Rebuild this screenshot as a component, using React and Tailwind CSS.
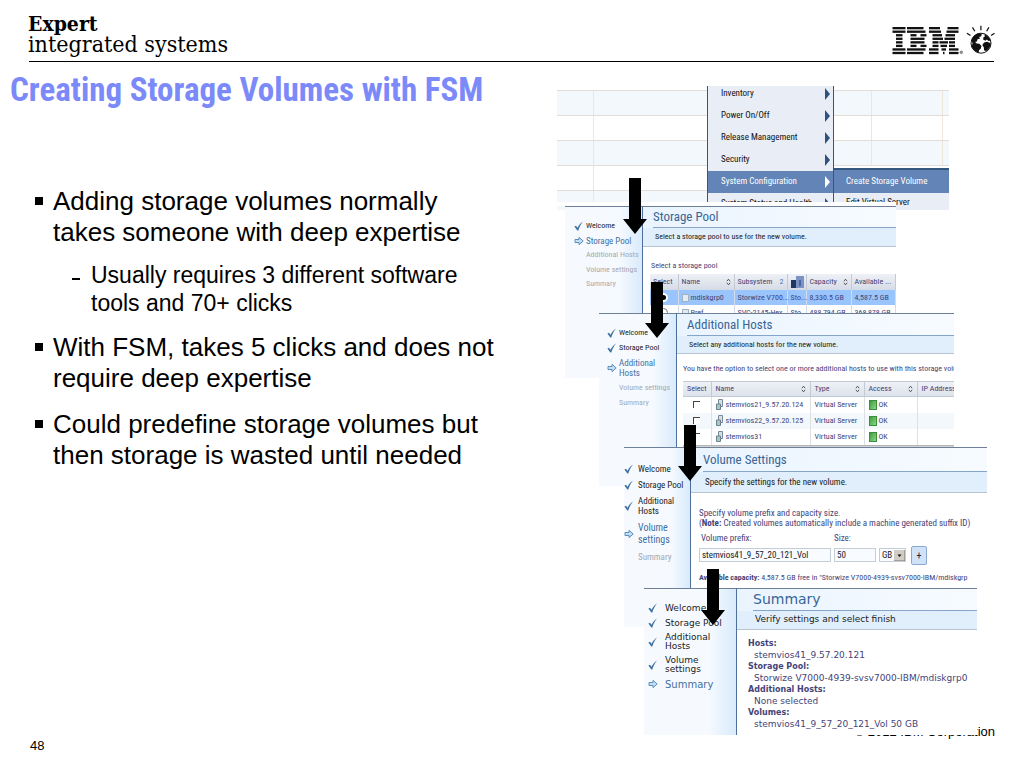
import { Fragment } from "react";

const MENU_ITEMS = [
  { label: "Inventory" },
  { label: "Power On/Off" },
  { label: "Release Management" },
  { label: "Security" },
  { label: "System Configuration", active: true },
  { label: "System Status and Health" },
];

const POOLS = [
  { name: "mdiskgrp0", subsystem: "Storwize V700...", type: "Sto...", capacity: "8,330.5 GB", available: "4,587.5 GB", selected: true },
  { name: "Pref", subsystem: "SVC-2145-Hex...", type: "Sto...", capacity: "488,794 GB", available: "368,878 GB" },
];

const HOSTS = ["stemvios21_9.57.20.124", "stemvios22_9.57.20.125", "stemvios31"];

const SUMMARY = [
  ["Hosts:", "stemvios41_9.57.20.121"],
  ["Storage Pool:", "Storwize V7000-4939-svsv7000-IBM/mdiskgrp0"],
  ["Additional Hosts:", "None selected"],
  ["Volumes:", "stemvios41_9_57_20_121_Vol 50 GB"],
];

// [x1, x2] spans for each of the eight stripes
const IBM_ROWS = [
  [[0, 13], [14.5, 31], [36.5, 47.5], [55, 66]],
  [[0, 13], [14.5, 33], [36.5, 48.5], [54, 66]],
  [[3.5, 10], [18, 24], [28, 34], [40, 49.5], [53, 62.5]],
  [[3.5, 10], [18, 32], [40, 50.5], [52, 62.5]],
  [[3.5, 10], [18, 32], [40, 46], [47, 55.5], [56.5, 62.5]],
  [[3.5, 10], [18, 24], [28, 34], [40, 46], [48, 54.5], [56.5, 62.5]],
  [[0, 13], [14.5, 33], [36.5, 46], [49, 53.5], [56.5, 66]],
  [[0, 13], [14.5, 31], [36.5, 46], [50.5, 52], [56.5, 66]],
];

function IbmLogo() {
  return (
    <svg viewBox="-1.5 0 104 36" className="h-9 w-[104px] overflow-visible" role="img" aria-label="IBM">
      {IBM_ROWS.map((row, i) =>
        row.map(([a, b]) => (
          <rect key={`${i}-${a}`} x={a + 1} y={7 + i * 3.55} width={b - a} height="2.3" fill="#111" />
        ))
      )}
      <circle cx="69.8" cy="32.3" r="1.3" fill="#999" stroke="#777" strokeWidth="0.8" />
      <g stroke="#111" strokeWidth="1.2">
        <path d="M75.4 13.2 79 15.6M81 7.4l2.3 3.8M89.4 5.8v4.4M97.4 7.4l-2.3 3.8M103 13.2l-3.4 2.4" />
      </g>
      <circle cx="89.5" cy="23.2" r="10" fill="#fff" stroke="#111" strokeWidth="1" />
      <path
        fill="#111"
        d="M80.2 19.500c1.200-3.200 3.800-5.600 7.400-6.200l2.600.8-.4 2.200-2.200.6 1 1.800-2.400.4-.8 2.400-1.800.6 1.600 1.400 2.600.2 2.200 2.200-.8 2.800-1.800 1.600v2.200c-3.600-.6-6.400-3.400-7.400-6.600l1-2.200zM92.800 14.200c3 1 5.400 3.400 6.200 6.400l-1.800.4-2-1.400-1.200 1.200-2.400-1.200.4-2.400 1.400-.8zM92.600 22.400l3-.6 3.600 1.400c-.2 3.400-1.800 6-4.400 7.800l-2.200-.6-.2-3-1.600-2.400z"
      />
    </svg>
  );
}

function DownArrow({ className }) {
  return (
    <svg viewBox="0 0 24 56" className={`absolute z-20 h-14 w-6 ${className}`} aria-hidden="true">
      <path d="M6 0h12v41h6L12 56 0 41h6z" fill="#000" />
    </svg>
  );
}

function StepIcon({ state }) {
  if (state === "done") {
    return (
      <svg viewBox="0 0 10 10" className="size-[10px]" aria-hidden="true">
        <path d="M.4 5.600 2 4.700 3.500 6.800C4.800 4 6.600 1.800 9 .4 6.800 3 5.400 5.800 4.300 9.400H3.300z" fill="#41729f" />
      </svg>
    );
  }
  if (state === "current") {
    return (
      <svg viewBox="0 0 10 10" className="size-[10px]" aria-hidden="true">
        <path d="M1 3.500h4V1.300L9.200 5 5 8.700V6.500H1z" fill="#c4def2" stroke="#5b8fbd" />
      </svg>
    );
  }
  return <span />;
}

function SortMark() {
  return (
    <svg viewBox="0 0 6 10" className="h-2 w-[5px] shrink-0" aria-hidden="true">
      <path d="M1 4l2-2.500L5 4M1 6l2 2.500L5 6" fill="none" stroke="#333" />
    </svg>
  );
}

function Wizard({ className, sidebar, list, title, titleClass, subtitle, subtitleClass, steps, stepGrid, currentClass, children }) {
  return (
    <section className={`absolute flex items-start ${className}`}>
      <nav className={`shrink-0 border-t border-r border-t-[#6d7f99] border-r-[#4d6f9b] bg-linear-to-r from-[#f6faff] from-70% to-[#d9eafb] ${sidebar}`}>
        <ol className={`flex flex-col ${list}`}>
          {steps.map(([label, state]) => (
            <li
              key={label}
              className={`grid items-center ${stepGrid} ${
                state === "done" ? "text-[#222]" : state === "current" ? `text-[#44709f] ${currentClass}` : "text-[#a3a9b1]"
              }`}
            >
              <StepIcon state={state} />
              <span className="whitespace-pre">{label}</span>
            </li>
          ))}
        </ol>
      </nav>
      <div className="min-w-0 flex-1 self-stretch overflow-hidden border-t border-[#6d7f99] bg-white">
        <header className="bg-linear-to-r from-[#eaf4ff] to-[#f7fbff]">
          <h2 className={`border-b border-[#86a5c8] text-[#386594] ${titleClass}`}>{title}</h2>
          <p className={`border-b border-[#b8c4d0] bg-[#e1effc] text-[#222] ${subtitleClass}`}>{subtitle}</p>
        </header>
        {children}
      </div>
    </section>
  );
}

function ContextMenu() {
  return (
    <section className="absolute top-0 left-0 flex h-[124px] w-[392px] items-start overflow-hidden text-[9px]">
      <div className="flex h-[116px] w-[150px] shrink-0 flex-col">
        <div className="h-[5px] shrink-0 border-b border-[#e2ddd6]" />
        {[0, 1, 2, 3, 4].map((i) => (
          <div key={i} className="h-[25px] shrink-0 border-b border-[#e2ddd6] odd:bg-white even:bg-[#f3f8fc]">
            <div className="h-full w-[37px] border-r border-[#eee6dc]" />
          </div>
        ))}
      </div>
      <ul className="-mt-[3px] h-[119px] w-[127px] shrink-0 overflow-hidden border-x border-[#36577f] bg-[#e9edf5] text-[#111]">
        {MENU_ITEMS.map((item) => (
          <li
            key={item.label}
            className={`flex h-[22px] items-center justify-between pr-[3px] pl-[13px] whitespace-nowrap ${
              item.active ? "bg-[#6384b6] text-white" : ""
            }`}
          >
            {item.label}
            <svg viewBox="0 0 5 12" className="h-3 w-[5px] shrink-0" aria-hidden="true">
              <path d="M0 0 5 6 0 12z" fill={item.active ? "#fff" : "#2d527f"} />
            </svg>
          </li>
        ))}
      </ul>
      <div className="flex h-[124px] flex-1 flex-col">
        <div className="h-[5px] shrink-0 border-b border-[#e2ddd6]" />
        {[0, 1, 2].map((i) => (
          <div key={i} className="flex h-[25px] shrink-0 border-b border-[#e2ddd6] odd:bg-white even:bg-[#f3f8fc]">
            <div className="w-[38px] border-r border-[#eee6dc]" />
            <div className="w-[71px] border-r border-[#eee6dc]" />
          </div>
        ))}
        <ul className="mt-[2px] -ml-px flex-1 overflow-hidden border-t-2 border-l border-[#36577f] bg-[#e9edf5] whitespace-nowrap">
          <li className="flex h-[23px] items-center bg-[#6384b6] pl-3 text-white">Create Storage Volume</li>
          <li className="flex h-[20px] items-center pl-3 text-[#111]">Edit Virtual Server</li>
        </ul>
      </div>
    </section>
  );
}

function StoragePool() {
  return (
    <>
      <p className="mt-[14px] ml-2 leading-[10px]">Select a storage pool</p>
      <table className="mt-[3px] ml-[7px] w-[246px] table-fixed border-collapse overflow-hidden">
        <thead className="bg-linear-to-b from-[#eef1f6] to-[#d5dbe6]">
          <tr className="h-4 leading-[12px] whitespace-nowrap *:border-r *:border-[#c3cad6] *:px-[3px] *:text-left *:font-normal">
            <th className="w-[28px]">Select</th>
            <th className="w-[56px]">
              <span className="flex items-center justify-between">Name <SortMark /></span>
            </th>
            <th className="w-[53px]">
              <span className="flex items-center justify-between">
                Subsystem <span className="text-[#4a7bc0]">2</span>
              </span>
            </th>
            <th className="w-[19px]">
              <svg viewBox="0 0 13 12" className="h-3 w-[13px]" aria-label="Type">
                <path d="M0 4h6v8H0z" fill="#1e3765" />
                <path d="M5 0h8v12H5z" fill="#7c92c3" />
                <path d="M8 4h2v6H8z" fill="#4965a3" />
              </svg>
            </th>
            <th className="w-[45px]">
              <span className="flex items-center justify-between">Capacity <SortMark /></span>
            </th>
            <th>Available ...</th>
          </tr>
        </thead>
        <tbody>
          {POOLS.map((p) => (
            <tr key={p.name} className={`h-[15px] leading-[12px] whitespace-nowrap *:border-r *:border-[#d3dcea] *:px-[3px] ${p.selected ? "bg-[#99c4fc]" : ""}`}>
              <td>
                <input
                  type="radio"
                  name="pool"
                  aria-label={p.name}
                  defaultChecked={p.selected}
                  className="mx-auto block size-[9px] appearance-none rounded-full border border-[#777] bg-white checked:border-2 checked:border-white checked:bg-black"
                />
              </td>
              <td>
                <span className="flex items-center gap-[2px]">
                  <span className="h-2 w-[7px] shrink-0 border border-[#9fb2c8] bg-[#e2eaf2]" />
                  {p.name}
                </span>
              </td>
              <td>{p.subsystem}</td>
              <td>{p.type}</td>
              <td>{p.capacity}</td>
              <td>{p.available}</td>
            </tr>
          ))}
        </tbody>
      </table>
    </>
  );
}

function AdditionalHosts() {
  return (
    <>
      <p className="mt-[10px] ml-[6px] leading-[10px] whitespace-nowrap">
        You have the option to select one or more additional hosts to use with this storage volume
      </p>
      <table className="mt-[7px] ml-[6px] w-[272px] table-fixed border-collapse">
        <thead className="bg-linear-to-b from-[#eef1f6] to-[#dce2ea]">
          <tr className="h-[15px] border-y border-[#c3cad6] leading-[12px] whitespace-nowrap *:border-r *:border-[#c3cad6] *:px-1 *:text-left *:font-normal">
            <th className="w-[28px]">Select</th>
            <th className="w-[99px]">
              <span className="flex items-center justify-between">Name <SortMark /></span>
            </th>
            <th className="w-[54px]">
              <span className="flex items-center justify-between">Type <SortMark /></span>
            </th>
            <th className="w-[53px]">
              <span className="flex items-center justify-between">Access <SortMark /></span>
            </th>
            <th>IP Address</th>
          </tr>
        </thead>
        <tbody>
          {HOSTS.map((host) => (
            <tr key={host} className="h-4 leading-[12px] whitespace-nowrap even:bg-[#f3f8fc] *:border-r *:border-[#dde0e4] *:px-1">
              <td>
                <input
                  type="checkbox"
                  aria-label={host}
                  className="mx-auto block size-[7px] appearance-none border-t border-l border-[#444] bg-white"
                />
              </td>
              <td>
                <span className="flex items-center gap-[3px]">
                  <svg viewBox="0 0 7 11" className="h-[11px] w-[7px] shrink-0" aria-hidden="true">
                    <path d="M2.500.5h4v7h-4z" fill="#d6dee6" stroke="#7a8a9c" />
                    <path d="M.5 5h4v5.500h-4z" fill="#a9c8c2" stroke="#6c8290" />
                  </svg>
                  {host}
                </span>
              </td>
              <td>Virtual Server</td>
              <td>
                <span className="flex items-center gap-[2px]">
                  <span className="h-[10px] w-2 border border-[#3c8c3c] bg-linear-to-br from-[#3ba03b] to-[#8ad48a]" />
                  OK
                </span>
              </td>
              <td />
            </tr>
          ))}
        </tbody>
      </table>
      <div className="ml-[6px] h-2 border-t border-[#b5b5b5] bg-[#d2d2d2]" />
    </>
  );
}

function VolumeSettings() {
  return (
    <form className="mt-[15px] ml-2 whitespace-nowrap">
      <p className="leading-[10px]">Specify volume prefix and capacity size.</p>
      <p className="leading-[10px]">
        (<b>Note:</b> Created volumes automatically include a machine generated suffix ID)
      </p>
      <div className="mt-[5px] flex items-end gap-[3px]">
        <label className="w-[132px] leading-[10px]">
          <span className="mb-[5px] block pl-[2px]">Volume prefix:</span>
          <input defaultValue="stemvios41_9_57_20_121_Vol" className="block h-[14px] w-full border border-[#c5cdd6] bg-[#f8fbff] px-[2px] text-[#222]" />
        </label>
        <label className="w-[42px] leading-[10px]">
          <span className="mb-[5px] block">Size:</span>
          <input defaultValue="50" className="block h-[14px] w-full border border-[#c5cdd6] bg-[#f8fbff] px-[2px] text-[#222]" />
        </label>
        <div className="relative w-[27px]">
          <select aria-label="Unit" className="block h-[14px] w-full appearance-none border border-[#c5cdd6] bg-[#f8fbff] px-[2px] text-[#222]">
            <option>GB</option>
          </select>
          <svg viewBox="0 0 11 11" className="pointer-events-none absolute top-[2px] right-[1px] size-[11px]" aria-hidden="true">
            <path d="M0 0h11v11H0z" fill="#d1cdc5" />
            <path d="M11 0v11H0" fill="none" stroke="#77736c" />
            <path d="M3.500 4.500h4l-2 2.500z" fill="#111" />
          </svg>
        </div>
        <button type="button" aria-label="Add" className="-mb-[3px] ml-[2px] h-[19px] w-4 rounded-[2px] border border-[#8ba9cf] bg-[#cfe2f8] text-[10px] leading-[10px] text-[#223]">
          +
        </button>
      </div>
      <p className="mt-[11px] text-[8px] leading-[10px]">
        <b>Available capacity:</b> 4,587.5 GB free in &quot;Storwize V7000-4939-svsv7000-IBM/mdiskgrp
      </p>
    </form>
  );
}

export default function App() {
  return (
    <div className="min-h-screen overflow-hidden bg-white font-['Liberation_Sans',sans-serif] text-black">
      <header className="mr-[30px] ml-[29px] flex h-[62px] items-start justify-between border-b border-black">
        <div className="-ml-px pt-[13px] font-['DejaVu_Serif_Condensed','DejaVu_Serif',serif] leading-[21px]">
          <div className="text-[21px] font-bold">Expert</div>
          <div className="text-[23px]">integrated systems</div>
        </div>
        <div className="pt-5">
          <IbmLogo />
        </div>
      </header>

      <main className="flex items-start justify-between pr-[37px] pl-[10px]">
        <div className="w-[500px]">
          <h1 className="pt-[9px] font-['Roboto_Condensed','Roboto',sans-serif] text-[33px] leading-[38px] font-bold whitespace-nowrap text-[#7b8af8]">
            Creating Storage Volumes with FSM
          </h1>
          <ul className="mt-[77px] ml-[25px] space-y-[15px] text-[26px] leading-[31px] whitespace-nowrap">
            <li className="grid grid-cols-[18px_1fr]">
              <span className="mt-[11px] size-2 bg-black" />
              <div>
                Adding storage volumes normally
                <br />
                takes someone with deep expertise
                <ul className="mt-[13px] text-[23px] leading-[28px]">
                  <li className="grid grid-cols-[19px_19px_1fr]">
                    <span />
                    <span className="mt-[17px] h-[2px] w-2 bg-black" />
                    <span>
                      Usually requires 3 different software
                      <br />
                      tools and 70+ clicks
                    </span>
                  </li>
                </ul>
              </div>
            </li>
            <li className="grid grid-cols-[18px_1fr]">
              <span className="mt-[11px] size-2 bg-black" />
              <span>
                With FSM, takes 5 clicks and does not
                <br />
                require deep expertise
              </span>
            </li>
            <li className="grid grid-cols-[18px_1fr]">
              <span className="mt-[11px] size-2 bg-black" />
              <span>
                Could predefine storage volumes but
                <br />
                then storage is wasted until needed
              </span>
            </li>
          </ul>
        </div>

        <div className="relative z-10 mt-6 h-[638px] w-[430px] shrink-0 font-['Roboto_Condensed','Roboto',sans-serif] text-[8px] text-[#454478]">
          <ContextMenu />
          <div className="absolute top-[116px] left-0 h-1 w-[339px] bg-white" />

          <Wizard
            className="top-[120px] left-[8px] h-[107px] w-[331px]"
            sidebar="h-[172px] w-[78px]"
            list="mt-[14px] ml-[9px] h-[68px] justify-between leading-[10px]"
            stepGrid="grid-cols-[12px_1fr]"
            currentClass="text-[9px]"
            title="Storage Pool"
            titleClass="ml-[10px] h-[21px] text-[13px] leading-[20px]"
            subtitle="Select a storage pool to use for the new volume."
            subtitleClass="h-[19px] pl-3 leading-[18px]"
            steps={[
              ["Welcome", "done"],
              ["Storage Pool", "current"],
              ["Additional Hosts"],
              ["Volume settings"],
              ["Summary"],
            ]}
          >
            <StoragePool />
          </Wizard>

          <Wizard
            className="top-[227px] left-[42px] h-[134px] w-[355px]"
            sidebar="h-[173px] w-[78px]"
            list="mt-[14px] ml-[8px] gap-[5px] leading-[10px]"
            stepGrid="grid-cols-[12px_1fr]"
            currentClass="text-[9px]"
            title="Additional Hosts"
            titleClass="ml-[10px] h-[22px] text-[13px] leading-[22px]"
            subtitle="Select any additional hosts for the new volume."
            subtitleClass="h-[18px] pl-3 leading-[17px]"
            steps={[
              ["Welcome", "done"],
              ["Storage Pool", "done"],
              ["Additional\nHosts", "current"],
              ["Volume settings"],
              ["Summary"],
            ]}
          >
            <AdditionalHosts />
          </Wizard>

          <Wizard
            className="top-[361px] left-[67px] h-[141px] w-[363px] text-[9px]"
            sidebar="h-[180px] w-[67px]"
            list="mt-[16px] gap-[6px] leading-[10px]"
            stepGrid="grid-cols-[14px_1fr]"
            currentClass="text-[10px] leading-[12px]"
            title="Volume Settings"
            titleClass="ml-3 h-[24px] text-[13px] leading-[24px]"
            subtitle="Specify the settings for the new volume."
            subtitleClass="h-[21px] pl-[14px] leading-[20px]"
            steps={[
              ["Welcome", "done"],
              ["Storage Pool", "done"],
              ["Additional\nHosts", "done"],
              ["Volume\nsettings", "current"],
              ["Summary"],
            ]}
          >
            <VolumeSettings />
          </Wizard>

          <Wizard
            className="top-[502px] left-[87px] h-[147px] w-[333px] font-['DejaVu_Sans',sans-serif] text-[9px]"
            sidebar="h-[147px] w-[93px]"
            list="mt-[14px] ml-[4px] gap-[5px] leading-[9px]"
            stepGrid="grid-cols-[17px_1fr]"
            currentClass="text-[10px]"
            title="Summary"
            titleClass="ml-4 h-[22px] text-[14px] leading-[21px]"
            subtitle="Verify settings and select finish"
            subtitleClass="h-[19px] pl-[18px] leading-[17px]"
            steps={[
              ["Welcome", "done"],
              ["Storage Pool", "done"],
              ["Additional\nHosts", "done"],
              ["Volume\nsettings", "done"],
              ["Summary", "current"],
            ]}
          >
            <dl className="mt-2 ml-[11px] whitespace-nowrap">
              {SUMMARY.map(([term, value]) => (
                <Fragment key={term}>
                  <dt className="text-[8px] leading-[12px] font-bold">{term}</dt>
                  <dd className="ml-[6px] leading-[11px]">{value}</dd>
                </Fragment>
              ))}
            </dl>
          </Wizard>

          <DownArrow className="top-[92px] left-[66px]" />
          <DownArrow className="top-[196px] left-[88px]" />
          <DownArrow className="top-[339px] left-[121px]" />
          <DownArrow className="top-[483px] left-[144px]" />
        </div>
      </main>

      <footer className="mr-[29px] ml-[30px] flex justify-between text-[13px] leading-[15px]">
        <span className="pt-[14px]">48</span>
        <span>© 2012 IBM Corporation</span>
      </footer>
    </div>
  );
}
